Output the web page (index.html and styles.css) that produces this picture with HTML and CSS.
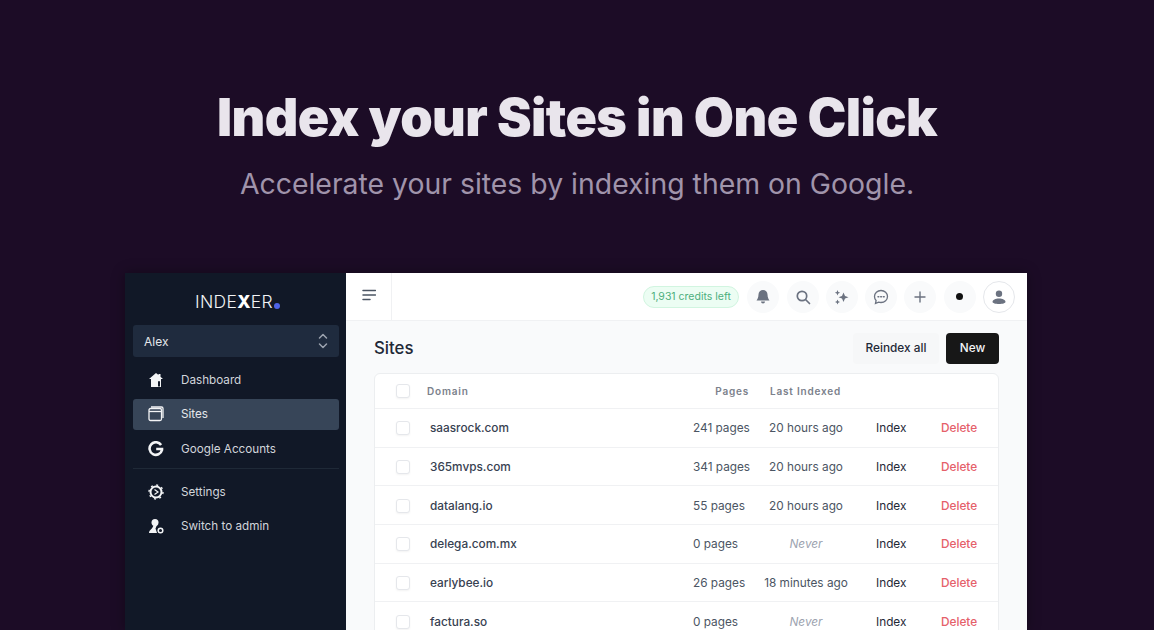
FILE: index.html
```html
<!DOCTYPE html>
<html lang="en">
<head>
  <meta charset="UTF-8">
  <title>Indexer</title>
  <link rel="stylesheet" href="styles.css">
</head>
<body>

  <header class="hero">
    <h1>Index your Sites in One Click</h1>
    <p>Accelerate your sites by indexing them on Google.</p>
  </header>

  <div class="app-window">
    <!-- Sidebar -->
    <aside class="sidebar">
      <div class="logo">INDE<b>X</b>ER<span class="logo-dot"></span></div>

      <div class="account-select">
        <span>Alex</span>
        <svg width="10" height="16" viewBox="0 0 10 16" fill="none" stroke="#9ca3af" stroke-width="1.5" stroke-linecap="round" stroke-linejoin="round"><path d="M1.5 5 5 1.5 8.5 5M1.5 11 5 14.500 8.500 11"/></svg>
      </div>

      <nav class="nav">
        <a class="nav-item">
          <svg class="nav-icon" viewBox="0 0 16 16"><path d="M8 1 1 7h2v8h10V7h2l-2.500-2.300V2h-2v1zM10 9.500h2v5h-2z" fill="#f3f4f6"/><path d="M10 9.500h2v4h-2z" fill="#111827"/></svg>
          Dashboard
        </a>
        <a class="nav-item active">
          <svg class="nav-icon" viewBox="0 0 16 16" fill="none" stroke="#f3f4f6" stroke-width="1.300"><rect x="1" y="2.500" width="12.500" height="12" rx="1.500"/><path d="M1 5.500h12.500"/><path d="M3 1h10.500A1.500 1.500 0 0 1 15 2.500V12"/></svg>
          Sites
        </a>
        <a class="nav-item">
          <svg class="nav-icon" viewBox="0 0 16 16" fill="none" stroke="#f3f4f6" stroke-width="2.600"><path d="M13.100 4A6.300 6.300 0 1 0 14 9V8H8.200"/></svg>
          Google Accounts
        </a>
        <div class="nav-divider"></div>
        <a class="nav-item">
          <svg class="nav-icon" viewBox="0 0 16 16" fill="none" stroke="#f3f4f6"><circle cx="8" cy="8" r="5.500" stroke-width="2"/><circle cx="8" cy="8" r="7" stroke-width="1.400" stroke-dasharray="2 3.500"/><path d="M6.500 5.500 10 8l-3.500 2.500" stroke-width="1.200"/></svg>
          Settings
        </a>
        <a class="nav-item">
          <svg class="nav-icon" viewBox="0 0 16 16"><circle cx="7" cy="4.500" r="3.500" fill="#f3f4f6"/><path d="M5.500 7h3.500L7.500 10.500 9 15H1c0-3 3.500-3.500 4.500-8z" fill="#f3f4f6"/><circle cx="12.500" cy="12.500" r="2.300" fill="none" stroke="#f3f4f6" stroke-width="1.500"/></svg>
          Switch to admin
        </a>
      </nav>
    </aside>

    <div class="main">
      <!-- Top bar -->
      <div class="topbar">
        <button class="menu-btn">
          <svg width="14" height="12" viewBox="0 0 14 12" fill="none" stroke="#4b5563" stroke-width="1.500" stroke-linecap="round"><path d="M1 1.500h12.500M1 6h12.500M1 10.500h7"/></svg>
        </button>
        <div class="topbar-right">
          <span class="credits">1,931 credits left</span>
          <span class="round-btn">
            <svg width="16" height="16" viewBox="0 0 16 16" fill="#6b7280"><path d="M8 1a4.500 4.500 0 0 0-4.500 4.500c0 3.500-1.500 5-2 6h13c-.5-1-2-2.500-2-6A4.500 4.500 0 0 0 8 1zM6 12.500a2 2 0 0 0 4 0z"/></svg>
          </span>
          <span class="round-btn">
            <svg width="16" height="16" viewBox="0 0 16 16" fill="none" stroke="#6b7280" stroke-width="1.700" stroke-linecap="round"><circle cx="7" cy="7" r="4.700"/><path d="m10.500 10.500 4 4"/></svg>
          </span>
          <span class="round-btn">
            <svg width="16" height="16" viewBox="0 0 16 16" fill="#6b7280"><path d="M9.500 3.500 11 7l3.500 1.200L11 9.500 9.500 13 8 9.500 4.500 8.200 8 7zM3.500 1l.8 1.900 1.900.8-1.900.8-.8 1.900-.8-1.900L.8 3.700l1.900-.8zM3.500 10.500l.8 1.800 1.700.7-1.700.8-.8 1.700-.8-1.700-1.700-.8 1.700-.7z"/></svg>
          </span>
          <span class="round-btn">
            <svg width="16" height="16" viewBox="0 0 16 16" fill="none" stroke="#6b7280" stroke-width="1.300"><path d="M8 1.500c3.700 0 6.500 2.700 6.500 6s-2.800 6-6.500 6c-.9 0-1.700-.2-2.400-.4L2.500 14.500l.6-3C2 10.400 1.500 9 1.500 7.500c0-3.300 2.800-6 6.500-6z"/><path d="M5 7.700h.8M7.700 7.700h.8M10.400 7.700h.8" stroke-width="1.500" stroke-linecap="round"/></svg>
          </span>
          <span class="round-btn">
            <svg width="14" height="14" viewBox="0 0 14 14" fill="none" stroke="#6b7280" stroke-width="1.400" stroke-linecap="round"><path d="M7 2v10M2 7h10"/></svg>
          </span>
          <span class="round-btn"><span class="dot"></span></span>
          <span class="round-btn avatar">
            <svg width="16" height="16" viewBox="0 0 16 16" fill="#6b7280"><circle cx="8" cy="4.700" r="3.200"/><path d="M1.500 13c0-2.300 3-3.500 6.500-3.500s6.500 1.200 6.500 3.500c0 1-3 2-6.500 2s-6.500-1-6.500-2z"/></svg>
          </span>
        </div>
      </div>

      <!-- Content -->
      <div class="content">
        <div class="page-head">
          <h2>Sites</h2>
          <div class="page-actions">
            <button class="btn-light">Reindex all</button>
            <button class="btn-dark">New</button>
          </div>
        </div>

        <div class="table">
          <div class="row head">
            <span class="check"></span>
            <span>Domain</span>
            <span class="pages-head">Pages</span>
            <span class="last-head">Last Indexed</span>
          </div>
          <div class="row">
            <span class="check"></span>
            <span class="domain">saasrock.com</span>
            <span>241 pages</span>
            <span class="last">20 hours ago</span>
            <span class="action">Index</span>
            <span class="delete">Delete</span>
          </div>
          <div class="row">
            <span class="check"></span>
            <span class="domain">365mvps.com</span>
            <span>341 pages</span>
            <span class="last">20 hours ago</span>
            <span class="action">Index</span>
            <span class="delete">Delete</span>
          </div>
          <div class="row">
            <span class="check"></span>
            <span class="domain">datalang.io</span>
            <span>55 pages</span>
            <span class="last">20 hours ago</span>
            <span class="action">Index</span>
            <span class="delete">Delete</span>
          </div>
          <div class="row">
            <span class="check"></span>
            <span class="domain">delega.com.mx</span>
            <span>0 pages</span>
            <span class="last never">Never</span>
            <span class="action">Index</span>
            <span class="delete">Delete</span>
          </div>
          <div class="row">
            <span class="check"></span>
            <span class="domain">earlybee.io</span>
            <span>26 pages</span>
            <span class="last">18 minutes ago</span>
            <span class="action">Index</span>
            <span class="delete">Delete</span>
          </div>
          <div class="row">
            <span class="check"></span>
            <span class="domain">factura.so</span>
            <span>0 pages</span>
            <span class="last never">Never</span>
            <span class="action">Index</span>
            <span class="delete">Delete</span>
          </div>
        </div>
      </div>
    </div>
  </div>

</body>
</html>
```
FILE: styles.css
```css
* {
  box-sizing: border-box;
  margin: 0;
  padding: 0;
}

body {
  font-family: Inter, 'Liberation Sans', sans-serif;
  height: 630px;
  overflow: hidden;
  background: #1c0c26;
  display: flex;
  flex-direction: column;
  align-items: center;
}

/* Hero */
.hero {
  height: 273px;
  padding-top: 88px;
  text-align: center;
}

.hero h1 {
  font-size: 52px;
  font-weight: 900;
  line-height: 60px;
  letter-spacing: -0.6px;
  color: #e9e5ec;
}

.hero p {
  margin-top: 16px;
  font-size: 28.4px;
  font-weight: 400;
  line-height: 40px;
  color: #a094ab;
}

/* Window */
.app-window {
  width: 902px;
  height: 357px;
  margin-right: 2px;
  display: flex;
  overflow: hidden;
  box-shadow: 0 0 12px rgba(0, 0, 0, 0.35);
}

.sidebar {
  width: 221px;
  flex-shrink: 0;
  background: #111827;
  padding: 0 7px 0 8px;
  color: #e5e7eb;
}

.logo {
  height: 52px;
  padding: 4px 0 0 3px;
  display: flex;
  align-items: center;
  justify-content: center;
  font-size: 17.5px;
  font-weight: 300;
  color: #f3f4f6;
  letter-spacing: 0.3px;
}

.logo b {
  font-weight: 800;
  color: #fff;
}

.logo-dot {
  width: 6px;
  height: 6px;
  margin: 9px 0 0 1px;
  background: #4f63e7;
  border-radius: 50%;
}

.account-select {
  height: 32px;
  padding: 0 11px;
  display: flex;
  align-items: center;
  justify-content: space-between;
  background: #1f2b3e;
  border-radius: 3px;
  font-size: 12px;
  color: #e5e7eb;
}

.nav {
  margin-top: 7px;
}

.nav-item {
  height: 31px;
  margin-bottom: 3.5px;
  padding-left: 15px;
  display: flex;
  align-items: center;
  gap: 17px;
  border-radius: 3px;
  font-size: 11.7px;
  color: #d1d5db;
}

.nav-item.active {
  background: #374558;
  color: #e5e7eb;
}

.nav-icon {
  width: 16px;
  height: 16px;
  flex-shrink: 0;
}

.nav-divider {
  height: 1px;
  margin: 4px 0 7px;
  background: #1f2937;
}

.main {
  flex: 1;
  background: #f9fafb;
}

/* Top bar */
.topbar {
  height: 48px;
  display: flex;
  justify-content: space-between;
  align-items: center;
  background: #fff;
  border-bottom: 1px solid #f0f1f3;
}

.menu-btn {
  width: 46px;
  height: 47px;
  background: none;
  border: none;
  border-right: 1px solid #f0f1f3;
}

.topbar-right {
  display: flex;
  align-items: center;
  gap: 7.3px;
  padding-right: 12px;
}

.credits {
  height: 22px;
  margin-right: 1px;
  padding: 0 7px;
  display: flex;
  align-items: center;
  font-size: 10.5px;
  color: #4caf7d;
  background: #ecfdf3;
  border: 1px solid #d1f5e0;
  border-radius: 11px;
}

.round-btn {
  width: 32px;
  height: 32px;
  display: flex;
  align-items: center;
  justify-content: center;
  background: #f9fafb;
  border-radius: 50%;
}

.round-btn.avatar {
  background: #fff;
  border: 1px solid #e5e7eb;
}

.dot {
  width: 7px;
  height: 7px;
  background: #111;
  border-radius: 50%;
}

/* Content */
.content {
  padding: 11px 28px 0;
}

.page-head {
  height: 32px;
  display: flex;
  justify-content: space-between;
  align-items: center;
}

.page-head h2 {
  font-size: 16.8px;
  font-weight: 500;
  color: #1f2937;
}

.page-actions {
  display: flex;
  gap: 7px;
}

.btn-light,
.btn-dark {
  height: 31px;
  border: none;
  border-radius: 4px;
  font-family: inherit;
  font-size: 11.8px;
  font-weight: 500;
}

.btn-light {
  width: 86px;
  background: #f6f7f8;
  color: #1f2937;
}

.btn-dark {
  width: 53px;
  background: #171717;
  color: #f3f4f6;
}

.table {
  margin-top: 9px;
  background: #fff;
  border: 1px solid #eceef0;
  border-radius: 6px;
  overflow: hidden;
}

.row {
  height: 38.7px;
  padding-top: 1px;
  display: grid;
  grid-template-columns: 52px 266px 71px 84px 28px 65px 57px;
  align-items: center;
  font-size: 11.8px;
  color: #4b5563;
  border-top: 1px solid #f0f1f3;
}

.row.head {
  height: 34px;
  padding-top: 0;
  font-size: 10px;
  font-weight: 600;
  letter-spacing: 0.8px;
  color: #7b818b;
  border-top: none;
}

.pages-head {
  text-align: right;
  padding-right: 15px;
}

.last-head {
  padding-left: 6px;
  white-space: nowrap;
}

.check {
  width: 14px;
  height: 14px;
  margin-left: 21px;
  background: #fff;
  border: 1px solid #e5e7eb;
  border-radius: 3px;
  box-shadow: 0 1px 2px rgba(0, 0, 0, 0.05);
}

.domain {
  padding-left: 3px;
  font-weight: 500;
  color: #374151;
}

.last {
  grid-column: 4;
  text-align: center;
  white-space: nowrap;
}

.never {
  font-style: italic;
  color: #9ca3af;
}

.action {
  grid-column: 6;
  font-weight: 400;
  color: #1f2937;
}

.delete {
  font-weight: 500;
  color: #e5606a;
}
```
